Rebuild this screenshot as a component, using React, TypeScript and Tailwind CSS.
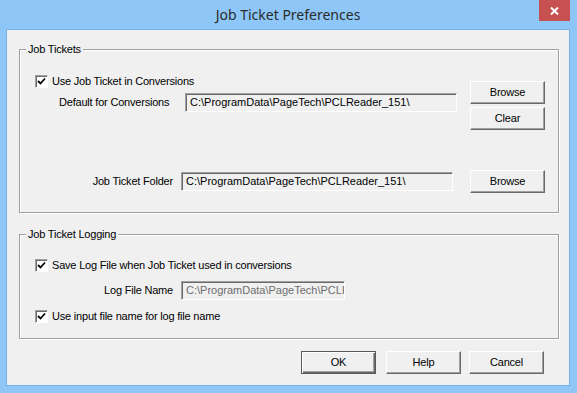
import React from "react";

const FONT = { fontFamily: '"Liberation Sans", Arial, sans-serif' };

function Btn({ label, primary = false, className = "" }: { label: string; primary?: boolean; className?: string }) {
  return (
    <div
      className={
        "flex h-[23px] w-[75px] items-center justify-center bg-[#f0f0f0] text-[11px] tracking-[-0.2px] text-black " +
        (primary
          ? "border border-[#5a5a5a] shadow-[inset_1px_1px_0_#ffffff,inset_-1px_-1px_0_#696969,inset_-2px_-2px_0_#a0a0a0] "
          : "border-t border-l border-t-white border-l-white border-b border-r border-b-[#696969] border-r-[#696969] shadow-[inset_-1px_-1px_0_#a0a0a0] ") +
        className
      }
    >
      {label}
    </div>
  );
}

function Field({ value, width, gray = false }: { value: string; width: string; gray?: boolean }) {
  return (
    <div
      className={
        "flex h-[19px] items-center overflow-hidden whitespace-nowrap bg-[#f0f0f0] pl-[4px] text-[11px] border-t border-l border-t-[#a0a0a0] border-l-[#a0a0a0] border-b border-r border-b-white border-r-white shadow-[inset_1px_1px_0_#696969] " +
        (gray ? "text-[#6d6d6d] " : "text-black ") +
        width
      }
    >
      {value}
    </div>
  );
}

function Check({ label }: { label: string }) {
  return (
    <div className="flex h-[13px] items-center">
      <div className="flex h-[13px] w-[13px] items-center justify-center bg-white border-t border-l border-t-[#a0a0a0] border-l-[#a0a0a0] border-b border-r border-b-white border-r-white shadow-[inset_1px_1px_0_#696969]">
        <svg width="9" height="9" viewBox="0 0 9 9">
          <path d="M1 4 L3.5 6.5 L8 1.5" stroke="#000" strokeWidth="1.8" fill="none" />
        </svg>
      </div>
      <span className="ml-[4px] text-[11px] tracking-[-0.2px] text-black">{label}</span>
    </div>
  );
}

function Group({ title, className, children }: { title: string; className: string; children: React.ReactNode }) {
  return (
    <div
      className={
        "relative border border-[#a0a0a0] shadow-[inset_1px_1px_0_#ffffff,1px_1px_0_#ffffff] " + className
      }
    >
      <span className="absolute -top-[8px] left-[6px] bg-[#f0f0f0] px-[2px] text-[11px] leading-[14px] tracking-[-0.2px] text-black">
        {title}
      </span>
      {children}
    </div>
  );
}

const PATH = "C:\\ProgramData\\PageTech\\PCLReader_151\\";

export default function App() {
  return (
    <div className="flex h-[393px] w-[577px] flex-col bg-[#8ec7f7] px-[6px] pb-[7px] pr-[7px]" style={FONT}>
      {/* title bar */}
      <div className="relative flex h-[29px] items-center justify-center">
        <span className="text-[14px] text-[#2b2b2b]" style={{ fontFamily: '"Noto Sans", "Open Sans", sans-serif' }}>
          Job Ticket Preferences
        </span>
        <div className="absolute right-[0px] top-0 flex h-[21px] w-[31px] items-center justify-center bg-[#c75050]">
          <svg width="9" height="8" viewBox="0 0 9 8">
            <path d="M1 0.5 L8 7.5 M8 0.5 L1 7.5" stroke="#fff" strokeWidth="2" />
          </svg>
        </div>
      </div>

      {/* client */}
      <div className="flex flex-1 flex-col border border-[#78b0e2] bg-[#f0f0f0]">
        <Group title="Job Tickets" className="ml-[12px] mt-[19px] h-[164px] w-[540px]">
          <div className="flex pl-[15px] pr-[13px] pt-[25px]">
            <div className="flex-1">
              <Check label="Use Job Ticket in Conversions" />
              <div className="mt-[5px] flex items-center">
                <span className="ml-[24px] w-[126px] text-[11px] tracking-[-0.2px] text-black">Default for Conversions</span>
                <Field value={PATH} width="w-[272px]" />
              </div>
            </div>
            <div className="mt-[6px] flex flex-col gap-[3px]">
              <Btn label="Browse" />
              <Btn label="Clear" />
            </div>
          </div>
          <div className="mt-[40px] flex items-center pl-[15px] pr-[13px]">
            <span className="w-[146px] pr-[8px] text-right text-[11px] tracking-[-0.2px] text-black">Job Ticket Folder</span>
            <Field value={PATH} width="w-[272px]" />
            <div className="flex-1" />
            <Btn label="Browse" />
          </div>
        </Group>

        <Group title="Job Ticket Logging" className="ml-[12px] mt-[21px] h-[105px] w-[540px]">
          <div className="pl-[15px] pt-[24px]">
            <Check label="Save Log File when Job Ticket used in conversions" />
            <div className="mt-[9px] flex items-center">
              <span className="w-[146px] pr-[8px] text-right text-[11px] tracking-[-0.2px] text-black">Log File Name</span>
              <Field value={PATH} width="w-[164px]" gray />
            </div>
            <div className="mt-[10px]">
              <Check label="Use input file name for log file name" />
            </div>
          </div>
        </Group>

        <div className="mt-[12px] flex">
          <div className="ml-[294px]">
            <Btn label="OK" primary />
          </div>
          <div className="ml-[10px]">
            <Btn label="Help" />
          </div>
          <div className="ml-[8px]">
            <Btn label="Cancel" />
          </div>
        </div>
      </div>
    </div>
  );
}
